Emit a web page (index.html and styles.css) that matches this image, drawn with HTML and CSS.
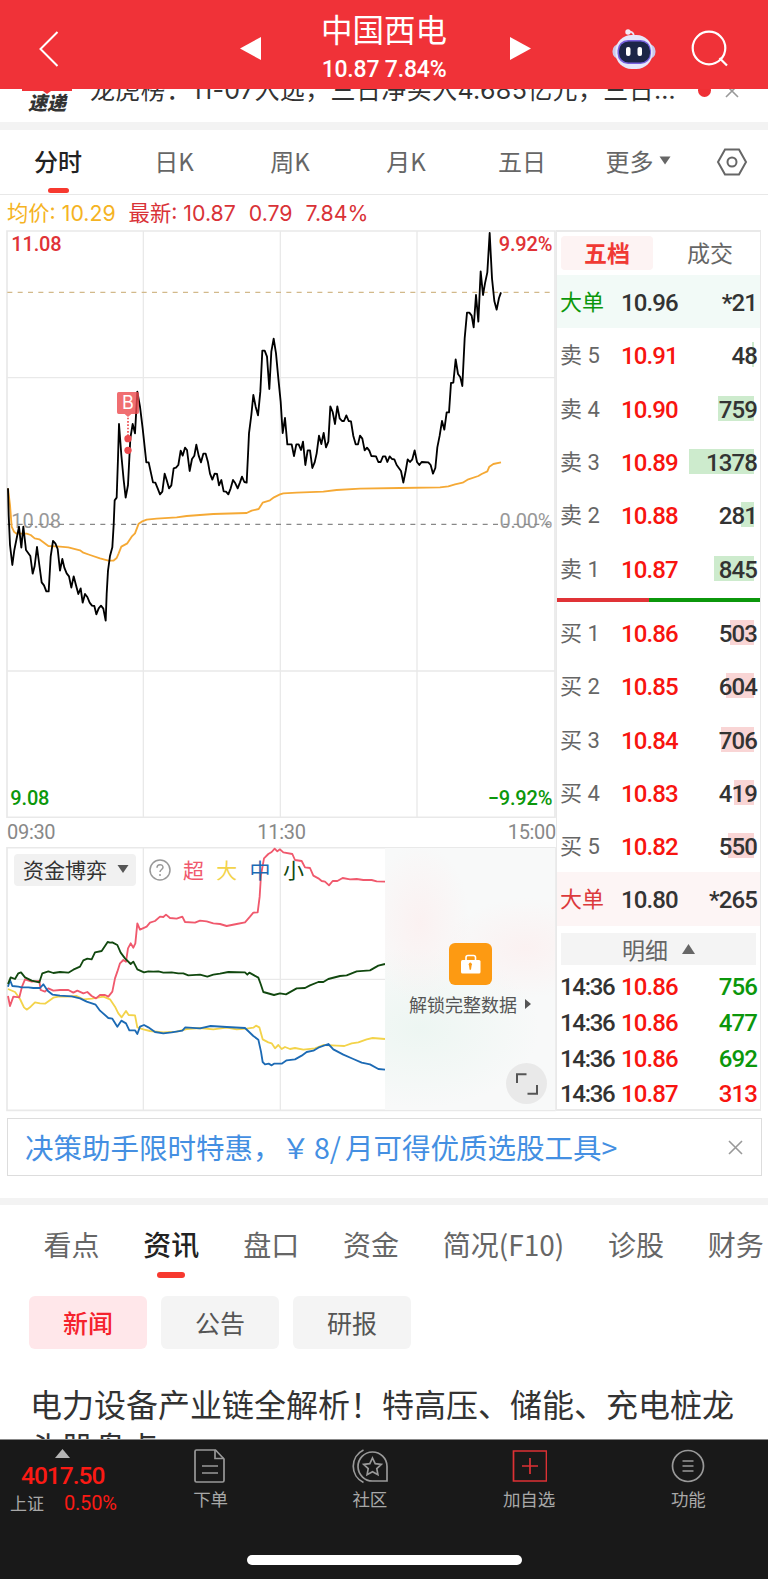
FILE: index.html
```html
<!DOCTYPE html>
<html lang="zh-CN">
<head>
    <meta charset="UTF-8">
    <meta name="viewport" content="width=device-width, initial-scale=1.0">
    <title>中国西电</title>
    <link rel="stylesheet" href="styles.css">
</head>
<body>
    <header class="header">
        <svg class="back" width="20" height="36" viewBox="0 0 20 36"><path d="M18.5 1 1.5 18l17 17" fill="none" stroke="#fff" stroke-width="2"/></svg>
        <svg class="arrow" width="21" height="23" viewBox="0 0 21 23"><path d="M0 11.5 21 0v23z" fill="#fff"/></svg>
        <div class="stock">
            <h1>中国西电</h1>
            <p>10.87 7.84%</p>
        </div>
        <svg class="arrow" width="21" height="23" viewBox="0 0 21 23"><path d="M21 11.5 0 0v23z" fill="#fff"/></svg>
        <svg class="robot" width="44" height="42" viewBox="0 0 44 42">
            <path d="M15.500 4c3-1 6 0 6.500 4" fill="none" stroke="#eadff2" stroke-width="1.800"/>
            <circle cx="16" cy="4" r="2.700" fill="#f3eaf7"/>
            <rect x=".5" y="16" width="43" height="15" rx="7" fill="#c9c9ec"/>
            <rect x="3.500" y="7" width="37" height="34" rx="16" fill="#e6e6fa"/>
            <rect x="5.500" y="12" width="33.500" height="24" rx="10.500" fill="#7660dd"/>
            <rect x="7" y="13.500" width="31" height="21" rx="9.500" fill="#1b2547"/>
            <rect x="14" y="19" width="4.500" height="9" rx="2" fill="#fff"/>
            <rect x="25.500" y="19" width="4.500" height="9" rx="2" fill="#fff"/>
        </svg>
        <svg class="search" width="38" height="38" viewBox="0 0 38 38"><g fill="none" stroke="#fff" stroke-width="2.200"><circle cx="18" cy="18" r="16.300"/><path d="m28.500 28 7.500 7.500"/></g></svg>
    </header>

    <div class="ticker">
        <div class="ticker-logo"><span>速递</span></div>
        <p>龙虎榜：11-07入选，三日净买入4.685亿元，三日…</p>
        <i class="dot"></i>
        <svg width="14" height="14" viewBox="0 0 14 14"><path d="m1 1 12 12M13 1 1 13" stroke="#999" stroke-width="1.600"/></svg>
    </div>

    <nav class="period">
        <a class="active">分时</a>
        <a>日K</a>
        <a>周K</a>
        <a>月K</a>
        <a>五日</a>
        <a>更多<svg width="12" height="9" viewBox="0 0 12 9"><path d="M.5.500h11L6 8.500z" fill="#666"/></svg></a>
        <svg class="setting" width="32" height="28" viewBox="0 0 32 28"><g fill="none" stroke="#666" stroke-width="2"><path d="M9 1.500h14l7 12.500-7 12.500H9L2 14z"/><circle cx="16" cy="14" r="4.500"/></g></svg>
    </nav>

    <div class="summary">
        <span class="avg">均价: 10.29</span>
        <span>最新: 10.87</span>
        <span>0.79</span>
        <span>7.84%</span>
    </div>

    <main class="quote">
        <section class="charts">
            <svg class="price-chart" width="550" height="588" viewBox="18 15 1650 1764">
                <g fill="none" stroke="#e9e9e9" stroke-width="4">
                    <path d="M21 18H1665V1777H21z" stroke-width="5"/>
                    <path d="M430 18V1777M841 18V1777M1251 18V1777M21 458H1665M21 1338H1665"/>
                </g>
                <g class="num">
                    <text x="34" y="78" fill="#e03236">11.08</text>
                    <text x="1657" y="78" text-anchor="end" fill="#e03236">9.92%</text>
                    <text class="zero" x="34" y="909" fill="#999">10.08</text>
                    <text class="zero" x="1657" y="909" text-anchor="end" fill="#999">0.00%</text>
                    <text x="31" y="1740" fill="#0b970b">9.08</text>
                    <text x="1657" y="1740" text-anchor="end" fill="#0b970b">−9.92%</text>
                </g>
                <g fill="none" stroke-width="3.500" stroke-dasharray="15 16">
                    <path d="M22 202H1665" stroke="#d2b98a"/>
                    <path d="M22 898H1665" stroke="#888"/>
                </g>
                <polyline class="line" stroke="#f5a935" points="24,790 30,840 35,905 42,920 50,926 80,926 92,930 104,940 118,943 128,950 145,963 180,965 205,967 240,976 250,983 270,990 300,1000 325,1007 340,1007 350,999 356,985 364,965 382,955 395,935 405,925 416,896 425,890 440,884 470,881 530,877 560,873 640,867 740,864 755,857 776,852 788,833 810,826 822,817 840,808 850,805 890,803 970,800 1010,795 1080,791 1200,789 1320,787 1345,784 1365,778 1388,773 1405,763 1435,753 1445,747 1462,739 1468,725 1480,717 1503,712"/>
                <polyline class="line" stroke="#000" points="24,790 26,870 30,960 37,1020 43,975 49,945 57,905 64,968 70,905 78,975 91,993 98,1046 104,1023 111,966 118,1020 125,1072 132,1081 139,1099 146,1099 152,995 159,948 166,955 173,972 180,1037 187,1002 193,1028 200,1045 207,1054 214,1088 221,1054 228,1081 235,1107 242,1090 248,1133 255,1107 262,1116 269,1133 276,1142 283,1143 289,1168 296,1150 303,1142 310,1151 317,1187 320,1107 324,1037 330,993 337,967 341,900 344,826 350,818 354,700 357,597 364,690 371,765 377,818 384,780 391,640 398,597 405,625 412,500 420,545 428,610 439,712 446,712 452,740 459,772 466,773 473,790 480,808 487,800 494,746 500,765 507,790 514,781 521,730 528,728 535,720 542,677 548,692 555,668 561,675 569,738 576,702 583,692 589,659 596,692 603,712 610,686 617,686 624,712 630,746 637,764 644,746 651,747 657,781 664,765 671,799 678,800 685,808 692,790 699,765 706,775 713,790 720,772 726,755 733,771 740,773 744,690 747,625 754,570 760,510 767,545 774,571 781,500 787,377 794,377 801,395 808,492 814,380 821,341 828,385 835,460 842,530 848,624 855,579 862,658 875,658 882,693 889,658 896,658 903,675 909,650 916,720 923,676 930,676 937,729 944,712 950,685 957,632 964,657 971,624 978,667 985,650 991,544 998,561 1005,597 1012,544 1019,580 1026,588 1032,588 1039,571 1046,588 1053,589 1060,633 1067,658 1074,658 1080,632 1087,641 1094,676 1101,668 1108,677 1114,693 1128,694 1135,711 1142,711 1149,694 1156,694 1162,711 1169,694 1176,702 1183,703 1190,720 1203,738 1210,773 1217,738 1223,703 1230,711 1237,703 1244,676 1251,711 1258,720 1265,711 1285,712 1292,720 1299,746 1306,729 1312,667 1319,632 1326,588 1333,614 1340,562 1347,562 1353,474 1360,473 1367,403 1374,447 1381,457 1387,483 1394,340 1401,263 1408,263 1415,272 1421,307 1428,210 1435,290 1442,139 1449,210 1455,175 1462,142 1469,24 1476,160 1483,228 1490,254 1497,219 1503,202"/>
                <!-- buy marker -->
                <g fill="#ec4a4e">
                    <path d="M356 501h56q5 0 5 5v56q0 5-5 5h-18l-10 9-10-9h-18q-5 0-5-5v-56q0-5 5-5z" opacity=".8"/>
                    <path d="M384 578v56" stroke="#ec4a4e" stroke-width="5" stroke-dasharray="5 5"/>
                    <circle cx="384" cy="641" r="11"/>
                    <circle cx="384" cy="676" r="11"/>
                    <text class="mark" x="384" y="553" text-anchor="middle">B</text>
                </g>
            </svg>

            <div class="times"><span>09:30</span><span>11:30</span><span>15:00</span></div>

            <div class="fund">
                <svg class="fund-chart" width="550" height="265" viewBox="18 201 1650 795">
                    <g fill="none" stroke="#e9e9e9" stroke-width="4">
                        <path d="M21 203H1665V991H21z" stroke-width="5"/>
                        <path d="M430 203V991M841 203V991M21 598H1155"/>
                    </g>
                    <polyline class="line" stroke="#f3d34a" points="24,627 45,636 60,657 72,682 80,689 92,680 105,667 120,670 135,671 160,653 175,650 200,650 230,648 250,658 275,656 310,650 330,658 345,680 355,700 365,712 378,693 386,705 405,706 412,742 430,748 450,753 490,757 530,755 560,747 600,744 640,748 680,743 710,748 740,746 760,743 768,737 778,742 788,778 805,787 815,790 825,805 835,795 845,807 855,801 870,807 885,804 910,809 945,805 970,795 1010,797 1033,798 1055,790 1075,787 1100,778 1118,774 1155,777"/>
                    <polyline class="line" stroke="#f0596d" points="24,648 30,678 40,650 58,652 66,620 75,598 95,605 118,603 122,630 135,635 145,625 160,632 180,630 205,630 220,638 232,632 250,640 262,636 275,648 288,655 300,645 315,645 325,650 337,635 345,595 352,575 360,550 370,540 378,545 384,505 392,490 400,503 406,490 412,430 420,449 440,440 450,428 465,423 480,410 490,411 498,404 510,414 530,416 547,410 555,426 585,428 600,422 620,424 640,430 660,432 680,438 710,432 735,427 750,410 760,398 773,397 779,350 783,285 792,235 805,222 815,216 824,206 832,214 840,208 850,217 877,222 885,240 905,243 915,262 930,264 940,287 955,295 965,303 975,305 987,316 998,303 1012,303 1028,294 1050,298 1070,297 1090,300 1115,300 1130,304 1155,305"/>
                    <polyline class="line" stroke="#1c6ab4" points="24,620 30,600 37,618 55,620 65,622 85,622 100,624 120,624 130,613 143,632 158,644 180,647 215,649 240,655 260,665 287,674 300,692 325,714 337,716 352,740 364,722 378,730 388,751 405,751 412,762 420,740 432,735 445,742 465,756 490,760 515,757 547,752 556,742 600,745 632,738 680,741 735,744 760,768 775,779 783,815 788,846 795,853 806,851 815,856 822,851 845,851 860,841 885,838 905,827 920,816 940,812 955,803 985,792 1000,808 1030,824 1060,837 1085,848 1110,853 1135,867 1155,869"/>
                    <polyline class="line" stroke="#11480f" points="24,612 32,592 45,597 55,580 63,577 75,592 95,602 118,607 127,580 145,574 160,579 180,576 205,578 220,569 240,560 250,541 262,536 275,538 285,517 305,513 323,486 330,488 337,487 352,495 362,518 375,535 392,552 400,545 412,568 432,577 445,574 460,575 475,574 490,578 515,577 535,580 550,580 565,586 600,584 622,590 640,584 660,581 685,576 735,577 742,584 748,578 775,593 782,612 790,636 822,645 840,640 858,643 890,625 915,624 930,616 955,606 970,606 985,597 1020,588 1040,586 1070,574 1110,571 1135,557 1155,552"/>
                </svg>
                <div class="legend">
                    <span class="picker">资金博弈<svg width="12" height="8" viewBox="0 0 12 8"><path d="M.5 0h11L6 8z" fill="#555"/></svg></span>
                    <svg class="help" width="22" height="22" viewBox="0 0 22 22"><circle cx="11" cy="11" r="10" fill="none" stroke="#999" stroke-width="1.500"/><path d="M8 8.700c0-4 6-4 6-.4 0 2.200-3 2.200-3 4.700" fill="none" stroke="#999" stroke-width="1.500"/><circle cx="11" cy="16" r="1" fill="#999"/></svg>
                    <span class="super">超</span>
                    <span class="big">大</span>
                    <span class="mid">中</span>
                    <span class="small">小</span>
                </div>
                <div class="locked">
                    <svg class="lock" width="43" height="42" viewBox="0 0 43 42">
                        <rect width="43" height="42" rx="6" fill="#fd9a12"/>
                        <path d="M17 17v-2.500q0-2 2-2h5.500q2 0 2 2V17" fill="none" stroke="#fff" stroke-width="1.600"/>
                        <rect x="12" y="17" width="19.500" height="13.500" rx="1.500" fill="#fff"/>
                        <path d="M20 22.500a1.700 1.700 0 1 1 2.600 0l-.6 4.200h-1.400z" fill="#fd9a12"/>
                    </svg>
                    <p>解锁完整数据<svg width="6" height="10" viewBox="0 0 6 10"><path d="M0 0v10l6-5z" fill="#555"/></svg></p>
                </div>
                <span class="expand"><svg width="22" height="22" viewBox="0 0 22 22"><path d="M1 10V1.200h9.500M21 12v8.800h-9.500" fill="none" stroke="#555" stroke-width="2"/></svg></span>
            </div>
        </section>

        <section class="book">
            <div class="book-tabs"><span class="active">五档</span><span>成交</span></div>
            <div class="row large-sell"><span>大单</span><b>10.96</b><em>*21</em></div>
            <div class="level sell">
                <div class="row"><span>卖 5</span><b>10.91</b><em><i style="width: 2px"></i>48</em></div>
                <div class="row"><span>卖 4</span><b>10.90</b><em><i style="width: 36px"></i>759</em></div>
                <div class="row"><span>卖 3</span><b>10.89</b><em><i style="width: 65px"></i>1378</em></div>
                <div class="row"><span>卖 2</span><b>10.88</b><em><i style="width: 13px"></i>281</em></div>
                <div class="row"><span>卖 1</span><b>10.87</b><em><i style="width: 40px"></i>845</em></div>
            </div>
            <div class="ratio"><i style="width: 45.500%"></i></div>
            <div class="level buy">
                <div class="row"><span>买 1</span><b>10.86</b><em><i style="width: 24px"></i>503</em></div>
                <div class="row"><span>买 2</span><b>10.85</b><em><i style="width: 28px"></i>604</em></div>
                <div class="row"><span>买 3</span><b>10.84</b><em><i style="width: 33px"></i>706</em></div>
                <div class="row"><span>买 4</span><b>10.83</b><em><i style="width: 20px"></i>419</em></div>
                <div class="row"><span>买 5</span><b>10.82</b><em><i style="width: 26px"></i>550</em></div>
            </div>
            <div class="row large-buy"><span>大单</span><b>10.80</b><em>*265</em></div>
            <div class="detail">明细<svg width="13" height="10" viewBox="0 0 13 10"><path d="M6.500 0 13 10H0z" fill="#666"/></svg></div>
            <div class="ticks">
                <div class="row"><time>14:36</time><b>10.86</b><em class="down">756</em></div>
                <div class="row"><time>14:36</time><b>10.86</b><em class="down">477</em></div>
                <div class="row"><time>14:36</time><b>10.86</b><em class="down">692</em></div>
                <div class="row"><time>14:36</time><b>10.87</b><em class="up">313</em></div>
            </div>
        </section>
    </main>

    <div class="promo">
        <p>决策助手限时特惠，￥<span>8/</span>月可得优质选股工具&gt;</p>
        <svg width="15" height="15" viewBox="0 0 15 15"><path d="m1 1 13 13M14 1 1 14" stroke="#999" stroke-width="1.600"/></svg>
    </div>

    <nav class="sections">
        <a>看点</a>
        <a class="active">资讯</a>
        <a>盘口</a>
        <a>资金</a>
        <a>简况(F10)</a>
        <a>诊股</a>
        <a>财务</a>
    </nav>

    <div class="chips">
        <button class="active">新闻</button>
        <button>公告</button>
        <button>研报</button>
    </div>

    <article class="news">电力设备产业链全解析！特高压、储能、充电桩龙头股盘点</article>

    <footer class="toolbar">
        <div class="items">
            <div class="index">
                <svg width="15" height="9" viewBox="0 0 15 9"><path d="M7.500 0 15 9H0z" fill="#b5b5b5"/></svg>
                <strong>4017.50</strong>
                <p>上证<b>0.50%</b></p>
            </div>
            <a>
                <svg class="doc" width="36" height="36" viewBox="0 0 36 36"><g fill="none" stroke="#999" stroke-width="1.700"><path d="M22.500 2H3.500Q2 2 2 3.500v29Q2 34 3.500 34h26q1.500 0 1.500-1.500V11z"/><path d="M22 2v8.500h9M9 18h16M9 25h16"/></g></svg>
                下单
            </a>
            <a>
                <svg class="star" width="36" height="36" viewBox="0 0 36 36"><g fill="none" stroke="#999" stroke-width="1.700"><path d="M35 33H21A14.500 14.500 0 1 1 35 18.500zM11.500 2a18 18 0 0 0 0 32.500"/><path d="m20.500 10 2.700 5.600 6.100.8-4.500 4.200 1.100 6.100-5.400-2.900-5.400 2.900 1.100-6.100-4.500-4.200 6.100-.8z"/></g></svg>
                社区
            </a>
            <a>
                <svg width="36" height="36" viewBox="0 0 36 36"><path d="M2.500 3h33v30h-33zM19 10v16M11 18h16" fill="none" stroke="#dd3134" stroke-width="1.700"/></svg>
                加自选
            </a>
            <a>
                <svg width="36" height="36" viewBox="0 0 36 36"><g fill="none" stroke="#999" stroke-width="1.700"><circle cx="18" cy="18" r="15.500"/><path d="M12.500 13h11M12.500 18h11M12.500 23h11"/></g></svg>
                功能
            </a>
        </div>
        <div class="home"></div>
    </footer>
</body>
</html>
```
FILE: styles.css
```css
* {
    box-sizing: border-box;
}

body {
    margin: 0;
    height: 1579px;
    display: flex;
    flex-direction: column;
    overflow: hidden;
    background: #fff;
    color: #333;
    font-family: "Noto Sans CJK SC", sans-serif;
}

h1,
p {
    margin: 0;
    font-weight: 400;
}

b,
em,
i {
    font-style: normal;
    font-weight: 500;
}

svg {
    display: block;
    flex: none;
}

/* header */
.header {
    flex: none;
    height: 89px;
    display: grid;
    grid-template-columns: 201px 21px 249px 21px 81px 79px 40px;
    align-items: center;
    padding: 8px 0 0 39px;
    background: #f03238;
}

.stock {
    align-self: start;
    text-align: center;
    color: #fff;
}

.stock h1 {
    margin-left: -3px;
    font-size: 31.500px;
    line-height: 40px;
}

.stock p {
    margin-left: -3px;
    padding-top: 9px;
    font: 500 23px/26px Roboto, sans-serif;
    letter-spacing: -0.200px;
}

.header .robot {
    grid-column: 6;
}

/* ticker */
.ticker {
    flex: none;
    height: 41px;
    display: flex;
    align-items: flex-start;
    overflow: hidden;
    border-bottom: 8px solid #f3f3f3;
    padding-left: 22px;
}

.ticker-logo {
    width: 50px;
    height: 33px;
    border-top: 2px solid #f03238;
    font-size: 19px;
    font-weight: 900;
    font-style: italic;
    line-height: 21px;
    text-align: center;
}

.ticker-logo::before {
    content: "";
    display: block;
    width: 8px;
    height: 3px;
    margin: 0 auto -3px;
    background: #f03238;
    clip-path: polygon(0 0, 100% 0, 50% 100%);
}

.ticker p {
    width: 608px;
    margin: -19px 0 0 18px;
    font: 25px/40px Inter, "Noto Sans CJK SC", sans-serif;
    letter-spacing: 0.360px;
    white-space: nowrap;
}

.ticker .dot {
    width: 13px;
    height: 13px;
    margin-top: -5px;
    border-radius: 50%;
    background: #ef3035;
}

.ticker svg {
    margin: -5px 0 0 14px;
}

/* period tabs */
.period {
    flex: none;
    height: 65px;
    display: grid;
    grid-template-columns: repeat(6, 116px) 72px;
    align-items: center;
    border-bottom: 1px solid #e8e8e8;
    font-size: 24px;
    color: #666;
}

.period a {
    position: relative;
    display: flex;
    align-items: center;
    justify-content: center;
    height: 64px;
    padding-bottom: 3px;
}

.period a svg {
    margin-left: 5px;
}

.period .active {
    color: #222;
    font-weight: 500;
}

.period .active::after {
    content: "";
    position: absolute;
    bottom: 1px;
    width: 21px;
    height: 5px;
    border-radius: 3px;
    background: #f7392f;
}

.setting {
    justify-self: center;
    margin-top: -1px;
}

/* summary */
.summary {
    flex: none;
    height: 35px;
    display: flex;
    gap: 13px;
    padding-left: 7px;
    font: 21.300px/37px Inter, "Noto Sans CJK SC", sans-serif;
    color: #d93237;
}

.summary .avg {
    color: #f5b323;
}

/* charts and order book */
.quote {
    flex: none;
    height: 882px;
    display: flex;
    padding-left: 6px;
}

.charts {
    width: 550px;
}

.line {
    fill: none;
    stroke-width: 5.500px;
    stroke-linejoin: round;
}

.num {
    font: 500 60px Roboto, sans-serif;
    letter-spacing: -0.500px;
}

.zero {
    font-weight: 400;
}

.mark {
    font: 54px Inter, sans-serif;
    fill: #fff;
}

.times {
    height: 29px;
    display: flex;
    justify-content: space-between;
    padding-left: 1px;
    font: 20px/29px Roboto, sans-serif;
    letter-spacing: -0.300px;
    color: #888;
}

.fund {
    position: relative;
}

.legend {
    position: absolute;
    top: 7px;
    left: 8px;
    display: flex;
    align-items: center;
    font-size: 21px;
    line-height: 30px;
}

.picker {
    display: flex;
    align-items: center;
    gap: 10px;
    width: 122px;
    height: 32px;
    padding: 0 0 2px 9px;
    margin-right: 13px;
    border-radius: 4px;
    background: #f1f1f1;
}

.help {
    margin-right: 12px;
}

.super,
.big,
.mid,
.small {
    width: 33.300px;
    margin-top: -2px;
}

.super {
    color: #f0596d;
}

.big {
    color: #f3d34a;
}

.mid {
    color: #1c6ab4;
}

.small {
    color: #11480f;
}

/* blurred preview of the paid part */
.locked {
    position: absolute;
    top: 1px;
    right: 1px;
    width: 170px;
    height: 262px;
    display: flex;
    flex-direction: column;
    align-items: center;
    padding-top: 95px;
    background:
        radial-gradient(ellipse 50px 80px at 35px 75px, rgba(253, 236, 236, 0.6), transparent),
        radial-gradient(ellipse 80px 50px at 140px 100px, rgba(253, 236, 236, 0.6), transparent),
        radial-gradient(ellipse 120px 80px at 35px 180px, #edf6f2, transparent),
        #f8f9f9;
}

.locked p {
    display: flex;
    align-items: center;
    gap: 8px;
    margin-top: 5px;
    font-size: 18px;
    line-height: 28px;
    color: #555;
}

.expand {
    position: absolute;
    right: 9px;
    bottom: 8px;
    width: 41px;
    height: 41px;
    display: flex;
    align-items: center;
    justify-content: center;
    border-radius: 50%;
    background: #e9e9e9;
}

.book {
    width: 205px;
    height: 881px;
    display: flex;
    flex-direction: column;
    border: 1px solid #e9e9e9;
    border-top: 2px solid #e9e9e9;
    border-bottom: 2px solid #e9e9e9;
}

.book-tabs {
    flex: none;
    height: 43px;
    display: flex;
    gap: 11px;
    padding: 4px 0 0 4px;
    font-size: 23px;
    line-height: 32px;
    text-align: center;
    color: #666;
}

.book-tabs span {
    width: 92px;
    height: 34px;
    border-radius: 4px;
}

.book-tabs .active {
    background: #fdf3f3;
    color: #f03a34;
    font-weight: 700;
}

.row {
    flex: none;
    display: grid;
    grid-template-columns: 61px 58px 1fr;
    align-items: center;
    height: 53.300px;
    padding: 3px 3px 0 3px;
    font: 500 24px/28px Roboto, "Noto Sans CJK SC", sans-serif;
    letter-spacing: -0.900px;
}

.row span {
    font-size: 22px;
    font-weight: 400;
    color: #666;
    letter-spacing: 0;
}

.row b {
    color: #f8140f;
}

.row em {
    position: relative;
    z-index: 0;
    text-align: right;
}

.row time {
    letter-spacing: -1.300px;
}

.row em i {
    position: absolute;
    z-index: -1;
    top: 0;
    right: 3px;
    height: 25px;
    background: #cdebcd;
}

.buy .row em i {
    background: #f9d5d5;
}

.large-sell {
    background: #f2faf7;
}

.large-sell span {
    color: #0b970b;
}

.large-buy {
    background: #fdf5f5;
}

.large-buy span {
    color: #dc3a3c;
}

.large-sell b,
.large-buy b {
    color: #333;
}

.ratio {
    flex: none;
    height: 4px;
    margin: 3px 0 4px;
    background: #0b970b;
}

.ratio i {
    display: block;
    height: 4px;
    background: #e03236;
}

.detail {
    flex: none;
    display: flex;
    align-items: center;
    justify-content: center;
    gap: 14px;
    height: 32px;
    margin: 7px 4px 4px;
    background: #f4f4f4;
    font-size: 23px;
    color: #666;
}

.ticks .row {
    height: 35.600px;
    padding-top: 2px;
}

.row .down {
    color: #0b970b;
}

.row .up {
    color: #f8140f;
}

/* promo */
.promo {
    flex: none;
    height: 58px;
    display: flex;
    align-items: center;
    justify-content: space-between;
    margin: 6px 6px 22px 7px;
    padding: 0 18px 0 17px;
    border: 1px solid #ddd;
    font-size: 28.500px;
    line-height: 40px;
    color: #448fe2;
}

.promo span {
    margin: 0 4px;
}

/* section tabs */
.sections {
    flex: none;
    height: 98px;
    display: flex;
    gap: 43.800px;
    border-top: 7px solid #f3f3f3;
    padding: 19px 0 0 43.500px;
    font-size: 28px;
    line-height: 40px;
    white-space: nowrap;
    color: #666;
}

.sections .active {
    color: #222;
    font-weight: 500;
}

.sections .active::after {
    content: "";
    display: block;
    width: 28px;
    height: 6px;
    margin: 8px auto 0;
    border-radius: 3px;
    background: #f7392f;
}

.chips {
    flex: none;
    display: flex;
    gap: 14px;
    padding-left: 29px;
}

.chips button {
    width: 118px;
    height: 53px;
    padding-bottom: 3px;
    border: 0;
    border-radius: 6px;
    background: #f4f4f4;
    font: 25px "Noto Sans CJK SC", sans-serif;
    color: #555;
}

.chips .active {
    background: #ffe7ea;
    color: #f5222d;
    font-weight: 500;
}

.news {
    flex: none;
    height: 90px;
    padding: 33px 30px 0;
    overflow: hidden;
    font-size: 32px;
    line-height: 43px;
}

/* bottom toolbar */
.toolbar {
    flex: none;
    height: 140px;
    border-top: 1px solid #888;
    background: #191919;
    font-size: 17.500px;
    line-height: 24px;
    color: #a8a8a8;
}

.items {
    display: grid;
    grid-template-columns: 131px repeat(4, 1fr);
    height: 115px;
}

.items a {
    display: flex;
    flex-direction: column;
    align-items: center;
    padding-top: 8px;
    gap: 3px;
}

.index {
    padding-top: 9px;
    font-size: 17px;
}

.index svg {
    margin-left: 55px;
}

.index strong {
    display: block;
    padding: 4px 0 0 21px;
    font: 500 24.500px/28px Roboto, sans-serif;
    letter-spacing: -1px;
    color: #fb1a14;
}

.index p {
    display: flex;
    gap: 20px;
    padding: 1px 0 0 10px;
}

.index b {
    font: 20px/24px Roboto, sans-serif;
    letter-spacing: -0.200px;
    color: #fb1a14;
}

.home {
    width: 275px;
    height: 10px;
    margin: 0 auto;
    border-radius: 5px;
    background: #fff;
}
```
